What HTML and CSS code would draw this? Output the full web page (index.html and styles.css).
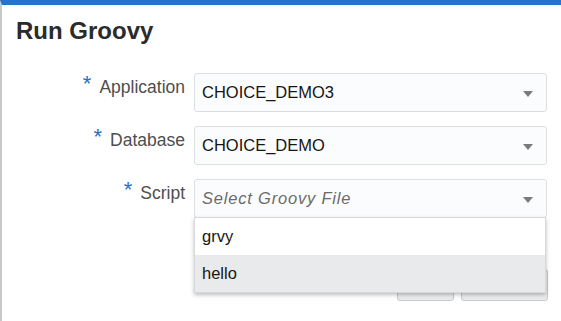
FILE: index.html
```html
<!DOCTYPE html>
<html lang="en">
<head>
    <meta charset="UTF-8">
    <title>Run Groovy</title>
    <link rel="stylesheet" href="styles.css">
</head>
<body>

    <div class="dialog">
        <h1 class="title">Run Groovy</h1>

        <div class="form">
            <div class="row">
                <label class="label"><span class="req">*</span>Application</label>
                <div class="select">
                    <span class="value">CHOICE_DEMO3</span>
                    <span class="arrow"></span>
                </div>
            </div>
            <div class="row">
                <label class="label"><span class="req">*</span>Database</label>
                <div class="select">
                    <span class="value">CHOICE_DEMO</span>
                    <span class="arrow"></span>
                </div>
            </div>
            <div class="row">
                <label class="label"><span class="req">*</span>Script</label>
                <div class="select open">
                    <span class="value placeholder">Select Groovy File</span>
                    <span class="arrow"></span>
                    <ul class="list">
                        <li>grvy</li>
                        <li class="hover">hello</li>
                    </ul>
                </div>
            </div>
        </div>

        <div class="footer">
            <button type="button" class="btn btn-small">Run</button>
            <button type="button" class="btn btn-wide">Cancel</button>
        </div>
    </div>

</body>
</html>
```

FILE: styles.css
```css
body {
    margin: 0;
    background: #fff;
    font-family: "Liberation Sans", Arial, sans-serif;
}
.dialog {
    height: 316px;
    border-top: 5px solid #2672cf;
    border-left: 2px solid #c8c8c8;
    background: #fff;
}
.title {
    margin: 0;
    padding: 12px 0 0 14px;
    font-size: 24px;
    line-height: 28px;
    font-weight: bold;
    color: #2b2b2b;
}
.form {
    margin-top: 28px;
    display: flex;
    flex-direction: column;
    gap: 14px;
}
.row {
    display: grid;
    grid-template-columns: 183px 353px;
    column-gap: 9px;
    height: 39px;
}
.label {
    text-align: right;
    padding-top: 4px;
    font-size: 17.5px;
    line-height: 20px;
    color: #4e4e4e;
}
.req {
    font-size: 22px;
    line-height: 0;
    color: #2a6fc4;
    margin-right: 8px;
    vertical-align: 2px;
}
.select {
    position: relative;
    display: flex;
    align-items: center;
    box-sizing: border-box;
    height: 39px;
    border: 1px solid #dcdfe2;
    border-radius: 3px;
    background: #fbfcfd;
}
.value {
    flex: 1;
    padding: 0 0 0 7px;
    font-size: 16.5px;
    color: #161513;
}
.placeholder {
    font-style: italic;
    letter-spacing: 0.8px;
    color: #6b6b6b;
}
.arrow {
    width: 0;
    height: 0;
    margin: 2px 13px 0 0;
    border-left: 5px solid transparent;
    border-right: 5px solid transparent;
    border-top: 6px solid #7b7b7b;
}
.list {
    position: absolute;
    top: 100%;
    left: -1px;
    right: 0;
    margin: 0;
    padding: 0;
    list-style: none;
    background: #fff;
    border: 1px solid #d6d8db;
    box-shadow: 0 2px 4px rgba(0, 0, 0, 0.25);
    z-index: 2;
}
.list li {
    height: 37px;
    line-height: 37px;
    padding-left: 7px;
    font-size: 16.5px;
    color: #161513;
}
.list li.hover {
    background: #e9eaeb;
}
.footer {
    margin-top: 51px;
    display: flex;
    justify-content: flex-end;
    gap: 7px;
    padding-right: 13px;
}
.btn {
    height: 32px;
    border: 1px solid #c5cad0;
    border-radius: 3px;
    background: #eaecee;
    font-family: inherit;
    font-size: 15px;
    color: #333;
}
.btn-small {
    width: 57px;
}
.btn-wide {
    width: 87px;
}
```
